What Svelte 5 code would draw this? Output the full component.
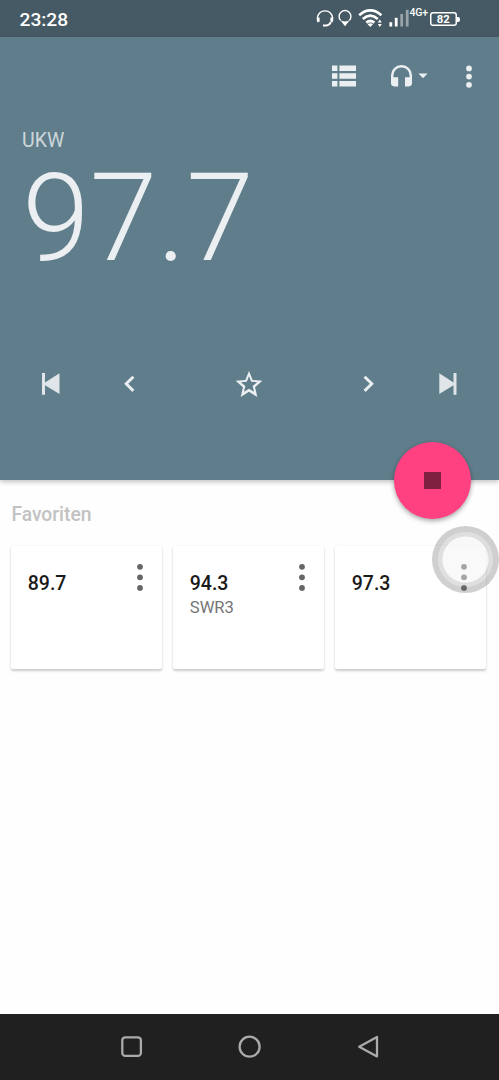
<script lang="ts">
	type Station = {
		frequency: string;
		name?: string;
	};

	const clock = '23:28';
	const band = 'UKW';
	const battery = 82;

	let frequency = $state('97.7');

	const favorites: Station[] = [
		{ frequency: '89.7' },
		{ frequency: '94.3', name: 'SWR3' },
		{ frequency: '97.3' }
	];
</script>

<div class="screen">
	<div class="status-bar">
		<span class="clock">{clock}</span>
		<div class="status-icons">
			<svg class="headset" width="18" height="18" viewBox="0 0 18 18">
				<path d="M2.4 13.2A7.6 7.6 0 1 1 15.6 13.2" />
				<path d="M2.6 8.6v4.2M15.4 8.6v4.2" class="thick" />
				<path d="M14.8 13.2Q13.4 16.4 10.6 16.4H7" class="thick" />
			</svg>
			<svg class="pin" width="14" height="18" viewBox="0 0 14 18">
				<path d="M2.6 11.4a5.9 5.9 0 1 1 8.8 0" />
				<path d="M2 10.8Q4.2 12.4 7 12.4T12 10.8L7 17.2z" class="solid" />
			</svg>
			<svg class="wifi" width="25" height="19" viewBox="0 0 25 19">
				<path d="M1.2 6.2Q12.3-3.4 23.4 6.2M4.8 10Q12.3 3.4 19.8 10M8.3 13.6Q12.3 10.4 16.3 13.6" />
				<path d="M9.6 15.2q2.7-2 5.4 0l-2.7 2.8zM19.8 13.4l2-3 2 3zM19.8 15l2 3 2-3z" class="solid" />
			</svg>
			<svg class="signal" width="20" height="19" viewBox="0 0 20 19">
				<rect x="0.4" y="13.2" width="2.8" height="4.3" />
				<rect x="5.8" y="8.8" width="2.8" height="8.7" />
				<rect x="11.3" y="5" width="2.8" height="12.5" class="off" />
				<rect x="16.8" y="0.8" width="2.8" height="16.7" class="off" />
			</svg>
			<span class="network">4G+</span>
			<div class="battery">{battery}</div>
		</div>
	</div>

	<header class="tuner">
		<div class="toolbar">
			<button aria-label="Senderliste">
				<svg width="24" height="22" viewBox="0 0 24 22">
					<path d="M0 0.4h5.4v5.6H0zM7.4 0.4H24v5.6H7.4zM0 8.2h5.4v5.6H0zM7.4 8.2H24v5.6H7.4zM0 16h5.4v5.6H0zM7.4 16H24v5.6H7.4z" />
				</svg>
			</button>
			<button class="output" aria-label="Audioausgabe">
				<svg width="37" height="22" viewBox="0 0 37 22">
					<path d="M10.5 0A10.4 10.4 0 0 0 0 10.5v7.6A3.3 3.3 0 0 0 3.4 21.4H7.2V12.2H2.4V10.5a8.1 8.1 0 0 1 16.2 0v1.7H14V21.4h3.7a3.3 3.3 0 0 0 3.3-3.3v-7.6A10.4 10.4 0 0 0 10.5 0zM27.4 8.5h9.2L32 13.2z" />
				</svg>
			</button>
			<button class="overflow" aria-label="Mehr">
				<svg width="6" height="23" viewBox="0 0 6 23">
					<circle cx="3" cy="3.4" r="2.9" />
					<circle cx="3" cy="11.6" r="2.9" />
					<circle cx="3" cy="19.8" r="2.9" />
				</svg>
			</button>
		</div>

		<div class="band">{band}</div>
		<div class="frequency">{frequency}</div>

		<div class="controls">
			<button aria-label="Suche zurück">
				<svg width="18" height="22" viewBox="0 0 18 22">
					<path d="M0 0h3v9.6L17.5 0.3v20.8L3 12.3v9.4H0z" class="dim" />
				</svg>
			</button>
			<button aria-label="Zurück">
				<svg width="12" height="18" viewBox="0 0 12 18">
					<path d="M9.4 1.7 2.2 8.8l7.2 7.1" class="stroke" />
				</svg>
			</button>
			<button class="star" aria-label="Favorit">
				<svg width="28" height="27" viewBox="0 0 28 27">
					<path d="M14 0 10.3 8.9 0.6 9.8l7.3 6.5L5.7 26 14 20.8l8.3 5.2-2.2-9.7 7.3-6.5-9.7-.9zm0 5.2 2.2 5.5 5.9.5-4.5 3.9 1.4 5.7-5-3.1-5 3.1 1.4-5.7-4.5-3.9 5.9-.5z" />
				</svg>
			</button>
			<button aria-label="Weiter">
				<svg width="12" height="18" viewBox="0 0 12 18">
					<path d="M1.6 1.7 8.8 8.8l-7.2 7.1" class="stroke" />
				</svg>
			</button>
			<button aria-label="Suche vor">
				<svg width="18" height="22" viewBox="0 0 18 22">
					<path d="M17.5 0h-3v9.6L0.3 0.3v20.8l14.2-8.8v9.4h3z" class="dim" />
				</svg>
			</button>
		</div>

		<button class="fab" aria-label="Stopp"><span></span></button>
	</header>

	<main>
		<h2>Favoriten</h2>
		<div class="cards">
			{#each favorites as station (station.frequency)}
				<article class="card">
					<div>
						<div class="station">{station.frequency}</div>
						{#if station.name}
							<div class="name">{station.name}</div>
						{/if}
					</div>
					<svg class="more" width="6" height="28" viewBox="0 0 6 28">
						<circle cx="3" cy="3.8" r="2.9" />
						<circle cx="3" cy="14.3" r="2.9" />
						<circle cx="3" cy="24.9" r="2.9" />
					</svg>
				</article>
			{/each}
		</div>
	</main>

	<nav>
		<svg width="24" height="24" viewBox="0 0 24 24">
			<rect x="2.3" y="2.3" width="18.6" height="18.6" rx="3" />
		</svg>
		<svg width="24" height="24" viewBox="0 0 24 24">
			<circle cx="11.6" cy="11.7" r="10" />
		</svg>
		<svg width="24" height="24" viewBox="0 0 24 24">
			<path d="M21 2v19.4L3.2 11.7z" />
		</svg>
	</nav>

	<div class="touch" aria-hidden="true"></div>
</div>

<style>
	:global(body) {
		background: #fff;
	}

	.screen {
		position: relative;
		display: flex;
		flex-direction: column;
		width: 499px;
		height: 1080px;
		overflow: hidden;
		background: #fefefe;
		font-family: Roboto, 'Liberation Sans', sans-serif;
	}

	svg {
		display: block;
		flex: none;
	}

	button {
		display: flex;
		align-items: center;
		justify-content: center;
		padding: 0;
		border: 0;
		background: none;
		fill: #ebeff1;
	}

	.status-bar {
		display: flex;
		justify-content: space-between;
		box-sizing: border-box;
		height: 37px;
		padding: 0 42px 0 19.5px;
		background: #455a64;
		color: #fff;
	}

	.clock {
		font-size: 19.2px;
		font-weight: 500;
		line-height: 39px;
	}

	.status-icons {
		display: flex;
		align-items: flex-start;
		padding-top: 9px;
		fill: #fff;
	}

	.headset,
	.pin,
	.wifi {
		fill: none;
		stroke: #fff;
		stroke-width: 1.4;
	}

	.headset .thick {
		stroke-width: 2;
	}

	.pin {
		margin-left: 4px;
	}

	.wifi {
		margin-left: 6px;
		stroke-width: 2.7;
	}

	.wifi .solid,
	.solid {
		fill: #fff;
		stroke: none;
	}

	.signal {
		margin-left: 6px;
	}

	.off {
		opacity: 0.45;
	}

	.network {
		width: 20px;
		margin-left: 1px;
		font-size: 10.5px;
		font-weight: 500;
		line-height: 8px;
		letter-spacing: -0.2px;
	}

	.battery {
		position: relative;
		width: 27.5px;
		height: 14.5px;
		margin-top: 2.5px;
		border-radius: 3px;
		box-shadow: inset 0 0 0 1.5px #fff;
		font-size: 11.3px;
		font-weight: 700;
		line-height: 15px;
		text-align: center;
	}

	.battery::after {
		content: '';
		position: absolute;
		top: 5px;
		right: -2.5px;
		width: 2.5px;
		height: 5px;
		border-radius: 0 2px 2px 0;
		background: #fff;
	}

	.tuner {
		position: relative;
		display: flex;
		flex-direction: column;
		height: 443px;
		background: #607d8b;
		box-shadow: 0 2px 5px rgb(0 0 0 / 0.24);
	}

	.toolbar {
		display: flex;
		align-items: center;
		justify-content: flex-end;
		height: 78px;
		padding-right: 27.5px;
	}

	.output {
		margin-left: 35px;
	}

	.overflow {
		margin-left: 37.5px;
	}

	.band {
		margin-top: 14px;
		padding-left: 22px;
		color: rgb(255 255 255 / 0.7);
		font-size: 19.5px;
		line-height: 24px;
	}

	.frequency {
		margin-top: 6px;
		padding-left: 22.2px;
		color: #ebeff1;
		font-size: 121.6px;
		font-weight: 300;
		line-height: 120px;
	}

	.controls {
		display: grid;
		grid-template-columns: 79px 79px 1fr 79px 79px;
		height: 50px;
		margin-top: 80px;
		padding: 0 12px 0 11px;
	}

	.dim {
		fill: #dfe5e8;
	}

	.stroke {
		fill: none;
		stroke: #ebeff1;
		stroke-width: 2.9;
	}

	.fab {
		position: absolute;
		right: 28px;
		bottom: -39px;
		width: 77px;
		height: 77px;
		border-radius: 50%;
		background: #ff4081;
		box-shadow: 0 2px 5px rgb(0 0 0 / 0.36);
	}

	.fab span {
		width: 17px;
		height: 17px;
		background: #802040;
	}

	main {
		flex: 1;
		padding: 22px 12px 0 11.4px;
	}

	h2 {
		margin: 0;
		color: #c2c2c2;
		font-size: 19.3px;
		font-weight: 500;
		line-height: 25px;
	}

	.cards {
		display: grid;
		grid-template-columns: repeat(3, 151px);
		gap: 11px;
		margin-top: 19px;
	}

	.card {
		display: flex;
		justify-content: space-between;
		box-sizing: border-box;
		height: 123px;
		padding: 17px 19.3px 0 16.4px;
		border-radius: 2px;
		background: #fff;
		box-shadow: 0 1.5px 2.5px rgb(0 0 0 / 0.2);
	}

	.station {
		margin-top: 9px;
		color: #1a1a1a;
		font-size: 19.5px;
		font-weight: 500;
		line-height: 24px;
	}

	.name {
		margin-top: 1px;
		color: #757575;
		font-size: 16.6px;
		line-height: 21px;
	}

	.more {
		fill: #666;
	}

	nav {
		display: flex;
		align-items: center;
		justify-content: center;
		gap: 94px;
		height: 66px;
		background: #202020;
		fill: none;
		stroke: #aaa;
		stroke-width: 2.3;
		stroke-linejoin: round;
	}

	.touch {
		position: absolute;
		top: 525.5px;
		left: 432px;
		box-sizing: border-box;
		width: 67px;
		height: 67px;
		border: 6px solid rgb(100 100 100 / 0.3);
		border-radius: 50%;
		background: radial-gradient(circle, rgb(242 242 242 / 0.45) 22.5px, rgb(150 150 150 / 0.3) 23.5px);
		background-clip: padding-box;
	}
</style>
